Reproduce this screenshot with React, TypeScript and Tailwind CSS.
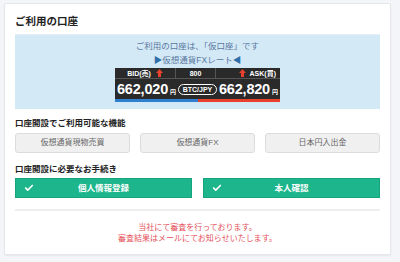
import { Check } from 'lucide-react';

const FONT = { fontFamily: '"Helvetica Neue", "Liberation Sans", "Noto Sans CJK JP", sans-serif' };

const FEATURES = ['仮想通貨現物売買', '仮想通貨FX', '日本円入出金'];
const STEPS = ['個人情報登録', '本人確認'];

function UpArrow() {
  return (
    <svg width="7" height="8" viewBox="0 0 7 8" className="inline-block">
      <path d="M3.5 0 L7 4 L5 4 L5 8 L2 8 L2 4 L0 4 Z" fill="#e8412c" />
    </svg>
  );
}

function Ticker() {
  return (
    <div className="w-[165px] bg-[#2a2a2a] text-white">
      <div className="flex h-[11px] items-center border-b border-[#555] text-[7px] font-bold leading-none">
        <div className="flex w-[61px] items-center justify-center gap-[5px] border-r border-[#555] h-full">
          <span>BID(売)</span>
          <UpArrow />
        </div>
        <div className="flex w-[40px] items-center justify-center border-r border-[#555] h-full">800</div>
        <div className="flex flex-1 items-center justify-end gap-[4px] pr-[4px] h-full">
          <UpArrow />
          <span>ASK(買)</span>
        </div>
      </div>
      <div className="flex h-[20px] items-center justify-between px-[2px]">
        <div className="flex items-baseline">
          <span className="text-[14.5px] font-bold leading-none tracking-[-0.2px]">662,020</span>
          <span className="ml-[2px] text-[6px] font-bold">円</span>
        </div>
        <div className="rounded-full border border-white px-[4px] py-[1px] text-[7px] font-bold leading-none">BTC/JPY</div>
        <div className="flex items-baseline">
          <span className="text-[14.5px] font-bold leading-none tracking-[-0.2px]">662,820</span>
          <span className="ml-[2px] text-[6px] font-bold">円</span>
        </div>
      </div>
      <div className="flex h-[3px]">
        <div className="flex-1 bg-[#2f7fd0]" />
        <div className="flex-1 bg-[#e8412c]" />
      </div>
    </div>
  );
}

export default function App() {
  return (
    <div className="h-[262px] w-[400px] bg-[#f4f5f9] pl-[4px] pr-[9px] pt-[3px]" style={FONT}>
      <div className="h-[252px] rounded-[2px] border border-[#e6e7ea] bg-white px-[10px] shadow-[0_1px_2px_rgba(0,0,0,0.06)]">
        <h2 className="pt-[10px] text-[10.5px] font-bold leading-[15px] text-[#222]">ご利用の口座</h2>

        <div className="mt-[5px] flex flex-col items-center border-t border-[#e4eef6] bg-[#d4e9f6] pb-[7px] pt-[5px]">
          <p className="text-[8.5px] leading-[12px] text-[#5878a0]">ご利用の口座は、「仮口座」です</p>
          <p className="mt-[2px] text-[8.5px] leading-[12px] text-[#5878a0]">
            <span className="text-[#2f6ea8]">▶</span>仮想通貨FXレート<span className="text-[#2f6ea8]">◀</span>
          </p>
          <div className="mt-[2px]">
            <Ticker />
          </div>
        </div>

        <h3 className="mt-[8px] text-[8.5px] font-bold leading-[12px] text-[#222]">口座開設でご利用可能な機能</h3>
        <div className="mt-[4px] grid grid-cols-3 gap-[10px]">
          {FEATURES.map(f => (
            <div
              key={f}
              className="flex h-[20px] items-center justify-center rounded-[3px] border border-[#dcdcdc] bg-[#f0f0f0] text-[8px] text-[#666]"
            >
              {f}
            </div>
          ))}
        </div>

        <h3 className="mt-[10px] text-[8.5px] font-bold leading-[12px] text-[#222]">口座開設に必要なお手続き</h3>
        <div className="mt-[3px] grid grid-cols-2 gap-[11px]">
          {STEPS.map(s => (
            <div
              key={s}
              className="relative flex h-[20px] items-center justify-center border border-[#17a57e] bg-[#1db58c] text-[8.5px] font-bold text-white"
            >
              <Check className="absolute left-[8px] h-[10px] w-[10px]" strokeWidth={4} />
              {s}
            </div>
          ))}
        </div>

        <div className="mt-[11px] h-[2px] bg-[#eeeeee]" />

        <div className="mt-[11px] flex flex-col items-center text-[8px] leading-[11px] text-[#e5505a]">
          <p>当社にて審査を行っております。</p>
          <p>審査結果はメールにてお知らせいたします。</p>
        </div>
      </div>
    </div>
  );
}
